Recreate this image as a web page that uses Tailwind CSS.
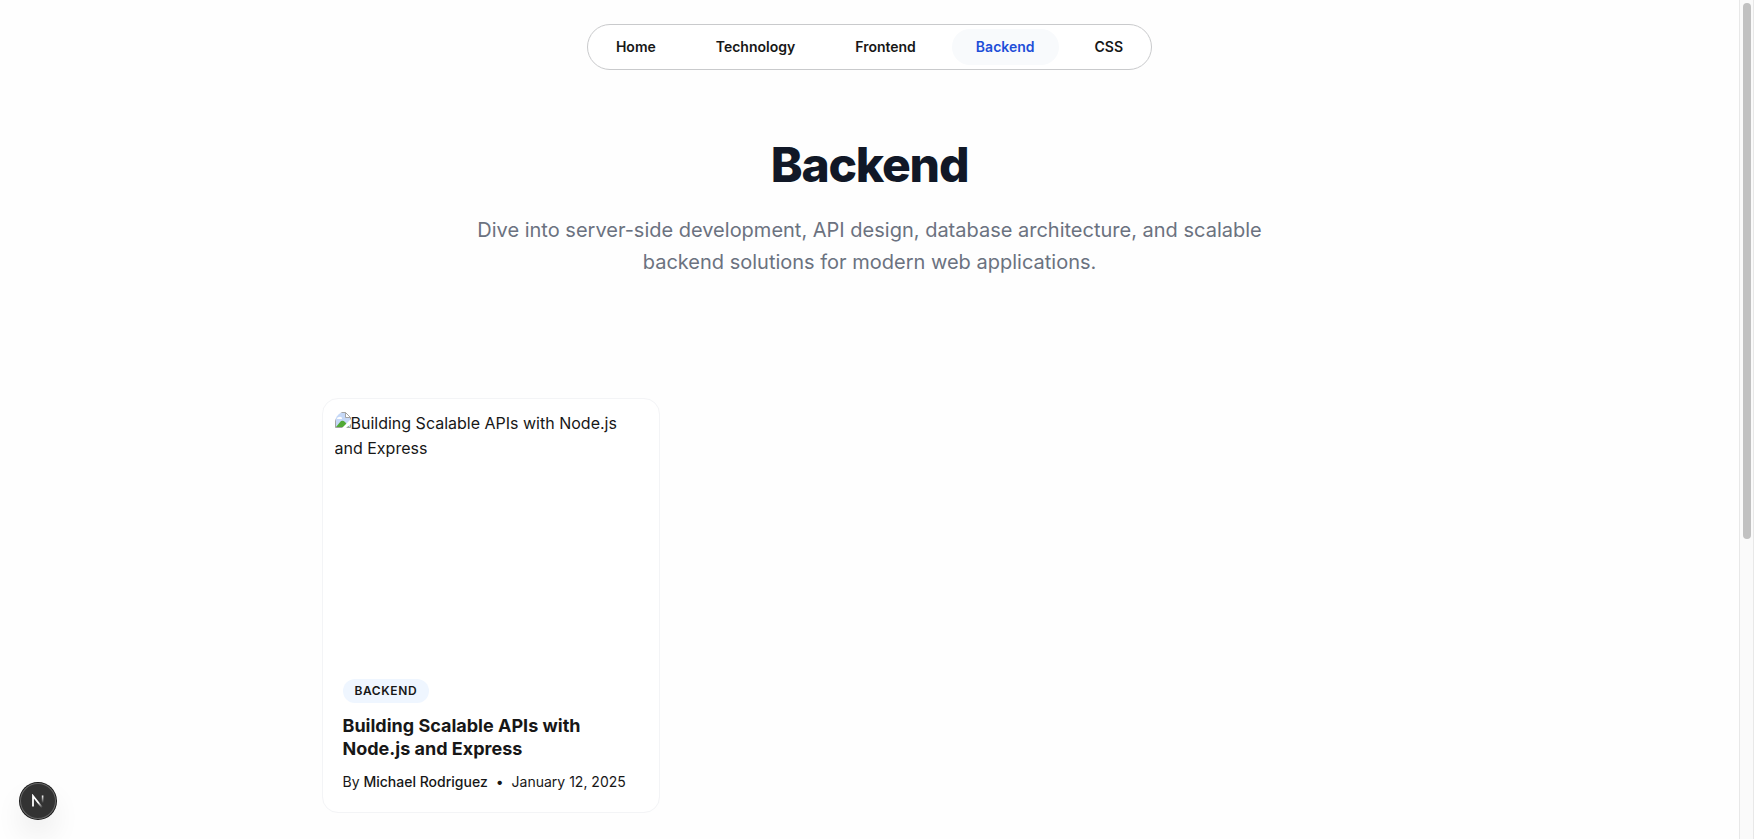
<!DOCTYPE html>
<html lang="en">
<head>
<meta charset="utf-8">
<title>Backend</title>
<script src="https://cdn.jsdelivr.net/npm/@tailwindcss/browser@4"></script>
</head>
<body class="flex h-[839px] overflow-hidden bg-[#fefefe] font-['Inter',sans-serif] text-[#171717] antialiased">
<div class="flex min-w-0 flex-1 flex-col">
  <header class="flex justify-center pt-6">
    <nav class="flex h-[46px] items-center gap-3 rounded-full border border-[#c9cacc] bg-white p-1 text-sm font-semibold">
      <a class="flex h-9 items-center rounded-full px-6">Home</a>
      <a class="flex h-9 items-center rounded-full px-6">Technology</a>
      <a class="flex h-9 items-center rounded-full px-6">Frontend</a>
      <a class="flex h-9 items-center rounded-full bg-[#f8fafc] px-6 text-[#1d4ed8]">Backend</a>
      <a class="flex h-9 items-center rounded-full px-6">CSS</a>
    </nav>
  </header>
  <section class="mt-[71px] flex flex-col items-center text-center">
    <h1 class="text-[48px] leading-[48px] font-extrabold tracking-[-1.2px] text-[#111827]">Backend</h1>
    <p class="mt-[25px] w-[800px] text-xl leading-8 text-[#6b7280]">Dive into server-side development, API design, database architecture, and scalable<br>backend solutions for modern web applications.</p>
  </section>
  <main class="mt-[120px] pl-[322px]">
    <article class="flex h-[415px] w-[338px] flex-col rounded-2xl border border-[#f3f4f6] bg-white py-3 pr-3 pl-[11.5px]">
      <div class="h-[256px] overflow-hidden rounded-xl text-base leading-[25px]">
        <svg class="-mt-2 inline-block align-[1px]" width="16" height="16" viewBox="0 0 16 16">
          <path d="M0.5 0.5h10l5 5v10h-15z" fill="#c5d8f7" stroke="#a3a3a3"/>
          <path d="M10.5 0.5v5h5z" fill="#fff" stroke="#a3a3a3"/>
          <path d="M2 7a2 2 0 0 1 2-2 2 2 0 0 1 3 2z" fill="#fff"/>
          <path d="M1 15l5-6q2-1 4 1l4 5z" fill="#50a935"/>
          <path d="M16 7L7 16h4l5-4z" fill="#fff"/>
        </svg><span>Building Scalable APIs with Node.js and Express</span>
      </div>
      <div class="mt-3 flex flex-col items-start px-2">
        <span class="flex h-6 items-center rounded-full bg-[#eff6ff] px-3 text-xs font-semibold tracking-[0.6px]">BACKEND</span>
        <h2 class="mt-[11px] text-lg leading-[23px] font-bold">Building Scalable APIs with<br>Node.js and Express</h2>
        <div class="mt-3 flex text-sm leading-5"><span>By <b class="font-medium">Michael Rodriguez</b></span><span class="mx-2">•</span><span>January 12, 2025</span></div>
      </div>
    </article>
  </main>
</div>
<div class="flex w-[15px] shrink-0 justify-center border-x border-[#e8e8e8] bg-[#fafafa] pt-[3px]">
  <div class="h-[536px] w-2 rounded-full bg-[#c1c1c1]"></div>
</div>
<div class="absolute bottom-5 left-5 flex size-9 items-center justify-center rounded-full bg-[#333] shadow-[0_0_0_1px_#171717,inset_0_0_0_1px_#666,0_16px_32px_-8px_#0000003d]">
  <svg width="14" height="14" viewBox="0 0 14 14" fill="none">
    <defs>
      <linearGradient id="diag" x1="8" y1="8" x2="12" y2="13" gradientUnits="userSpaceOnUse"><stop stop-color="#fff"/><stop offset="1" stop-color="#fff" stop-opacity="0"/></linearGradient>
      <linearGradient id="stem" x1="11" y1="1.5" x2="11" y2="9" gradientUnits="userSpaceOnUse"><stop stop-color="#fff"/><stop offset="1" stop-color="#fff" stop-opacity="0"/></linearGradient>
    </defs>
    <path d="M2 12.5V2l9.5 12" stroke="url(#diag)" stroke-width="1.8"/>
    <path d="M11.6 1.5V9" stroke="url(#stem)" stroke-width="1.6"/>
  </svg>
</div>
</body>
</html>
